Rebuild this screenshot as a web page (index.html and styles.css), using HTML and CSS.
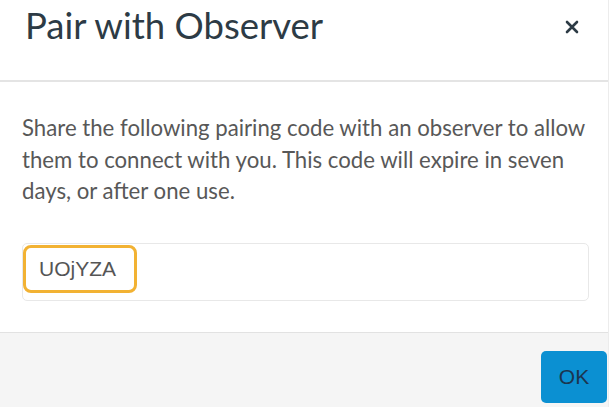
FILE: index.html
```html
<!DOCTYPE html>
<html>
<head>
  <meta charset="utf-8">
  <title>Pair with Observer</title>
  <link rel="stylesheet" href="styles.css">
</head>
<body>
  <div class="dialog">
    <div class="dialog-header">
      <h1>Pair with Observer</h1>
      <button class="close" aria-label="Close">
        <svg width="14" height="14" viewBox="0 0 14 14">
          <path d="M2 2 L12 12 M12 2 L2 12" stroke="#2d3b45" stroke-width="2.6" stroke-linecap="round"/>
        </svg>
      </button>
    </div>

    <div class="dialog-body">
      <p>Share the following pairing code with an observer to allow them to connect with you. This code will expire in seven days, or after one use.</p>
      <div class="code-field">
        <span class="code">UOjYZA</span>
      </div>
    </div>

    <div class="dialog-footer">
      <button class="btn-ok">OK</button>
    </div>
  </div>
</body>
</html>
```

FILE: styles.css
```css
body {
  margin: 0;
  font-family: Lato, "Open Sans", sans-serif;
  background: #fff;
}

.dialog {
  width: 608px;
  height: 407px;
  display: flex;
  flex-direction: column;
  border-right: 1px solid #ececec;
}

.dialog-header {
  height: 80px;
  display: flex;
  align-items: flex-start;
  justify-content: space-between;
  padding: 0 29px 0 25px;
  border-bottom: 2px solid #e4e4e4;
}

.dialog-header h1 {
  margin: 3px 0 0;
  font-size: 36.5px;
  font-weight: 400;
  color: #2d3b45;
}

.close {
  margin-top: 20px;
  padding: 0;
  border: none;
  background: none;
}

.dialog-body {
  height: 250px;
  padding: 0 19px 0 22px;
}

.dialog-body p {
  margin: 30px 0 0;
  font-size: 22.2px;
  line-height: 31.5px;
  color: #585858;
}

.code-field {
  margin-top: 36px;
  height: 56px;
  border: 1px solid #e8e8e8;
  border-radius: 5px;
  display: flex;
  align-items: flex-start;
}

.code {
  margin: 1px 0 0 0;
  width: 114px;
  height: 48px;
  box-sizing: border-box;
  padding: 0 0 0 13px;
  border: 3px solid #f2b233;
  border-radius: 8px;
  display: flex;
  align-items: center;
  font-family: "Liberation Sans", Arial, sans-serif;
  font-size: 21px;
  color: #555;
}

.dialog-footer {
  flex: 1;
  background: #f5f5f5;
  border-top: 1px solid #e2e2e2;
  display: flex;
  justify-content: flex-end;
  align-items: flex-end;
  padding-right: 1px;
}

.btn-ok {
  width: 66px;
  height: 52px;
  margin-bottom: 4px;
  border: none;
  border-radius: 5px;
  background: #0b90d2;
  color: #1b3550;
  font-family: "Liberation Sans", Arial, sans-serif;
  font-size: 21px;
}
```
